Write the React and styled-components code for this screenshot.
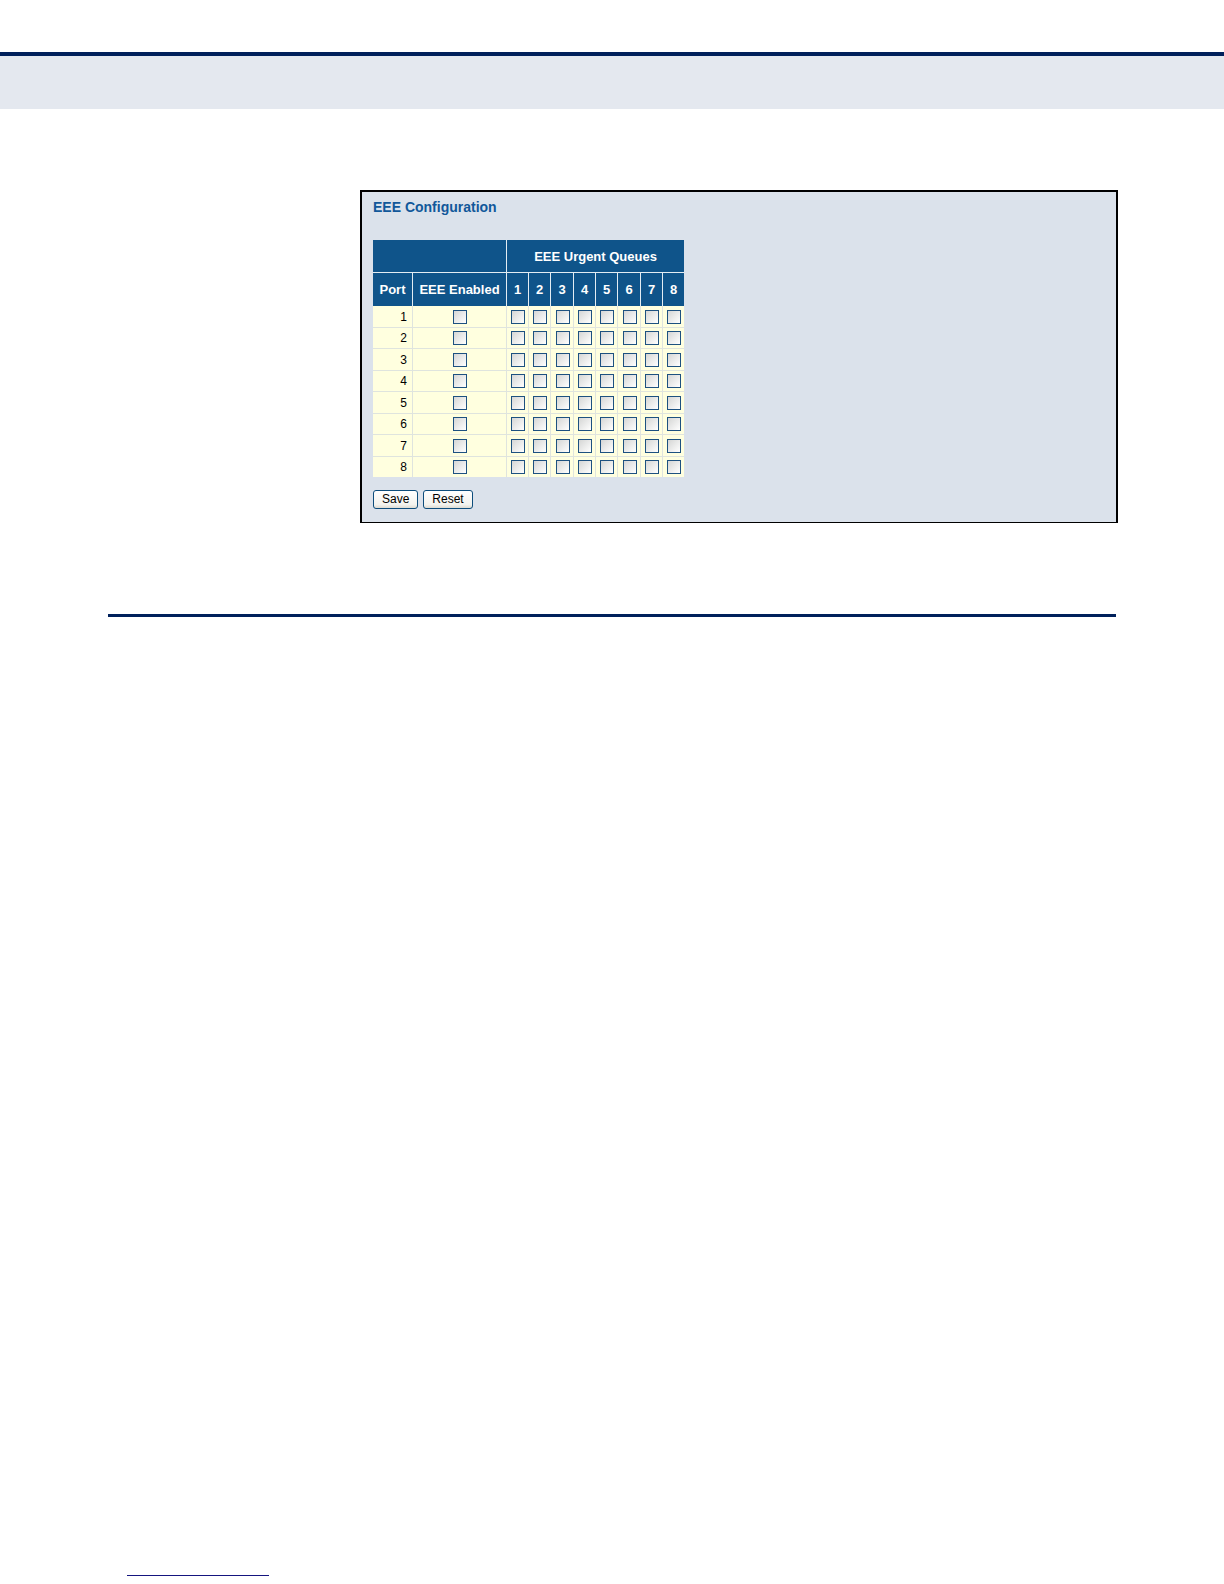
import React, { useState } from "react";
import styled, { createGlobalStyle } from "styled-components";

const NAVY = "#00205b";
const BLUE = "#0f548a";

const GlobalStyle = createGlobalStyle`
  * { box-sizing: border-box; }
  body {
    margin: 0;
    background: #fff;
    color: #000;
    font-family: "Liberation Sans", Arial, sans-serif;
  }
`;

const Page = styled.div`
  display: flex;
  flex-direction: column;
  min-height: 100vh;
  padding: 52px 0 8px;
`;

const Banner = styled.header`
  height: 57px;
  border-top: 4px solid ${NAVY};
  background: #e4e8ef;
`;

const Panel = styled.form`
  margin: 81px 106px 0 360px;
  padding: 7px 11px 13px;
  border: 2px solid #000;
  border-bottom-width: 1px;
  background: #dbe2eb;
`;

const Title = styled.h1`
  margin: 0;
  padding-bottom: 25px;
  color: #11589a;
  font-size: 14px;
  line-height: 16px;
  font-weight: bold;
`;

const Table = styled.table`
  width: 311px;
  table-layout: fixed;
  border-collapse: separate;
  border-spacing: 0;
  font-size: 13px;
  line-height: 15px;
`;

const Column = styled.col`
  width: ${({ $width }) => $width}px;
`;

const HeadCell = styled.th`
  height: 33px;
  padding: 0;
  border-right: ${({ $last }) => ($last ? "0" : "1px solid #e3edf3")};
  border-bottom: ${({ $group }) => ($group ? "1px solid #e3edf3" : "0")};
  background: ${BLUE};
  color: #fff;
  text-align: center;
  vertical-align: middle;
`;

const Cell = styled.td`
  padding: 3px 0 3px 1px;
  border-right: 1px solid #dfe4de;
  border-bottom: 1px solid #dfe4de;
  background: #ffffdf;
  vertical-align: top;

  &:last-child { border-right: 0; }
`;

const PortCell = styled(Cell).attrs({ as: "th", scope: "row" })`
  padding-right: 5px;
  font-size: 12px;
  font-weight: normal;
  text-align: right;
  line-height: 14px;
`;

const PortRow = styled.tr`
  height: 21px;

  &:nth-child(odd) { height: 22px; }
  &:nth-child(odd) > * { padding-top: 4px; }
  &:last-child { height: 20px; }
  &:last-child > * { border-bottom: 0; }
`;

const CheckBox = styled.input.attrs({ type: "checkbox" })`
  appearance: none;
  display: block;
  width: 14px;
  height: 14px;
  margin: 0 auto;
  border: 1px solid #1d5180;
  background: linear-gradient(135deg, #d5d6d5, #fff);

  &:checked { box-shadow: inset 0 0 0 3px #fff, inset 0 0 0 8px #21a121; }
`;

const Actions = styled.div`
  display: flex;
  gap: 5px;
  padding-top: 13px;
`;

const Button = styled.button`
  height: 19px;
  padding: 0 8px;
  border: 1px solid #0d4d7c;
  border-radius: 3px;
  background: linear-gradient(#fff, #f3f3ee 80%, #dedbd2);
  color: #000;
  font: 12px/17px "Liberation Sans", Arial, sans-serif;
`;

const Divider = styled.hr`
  width: auto;
  height: 3px;
  margin: 91px 108px 0;
  border: 0;
  background: ${NAVY};
`;

const Footer = styled.footer`
  width: 142px;
  margin: auto 0 0 127px;
  border-top: 1px solid #15157f;
`;

const numbers = [1, 2, 3, 4, 5, 6, 7, 8];
const columns = [40, 94, 22, 22, 23, 22, 22, 23, 22, 21];

export default function App() {
  const [checked, setChecked] = useState({});
  const toggle = (id) => setChecked((now) => ({ ...now, [id]: !now[id] }));

  const renderBox = (id, label) => (
    <CheckBox
      id={id}
      aria-label={label}
      checked={Boolean(checked[id])}
      onChange={() => toggle(id)}
    />
  );

  return (
    <>
      <GlobalStyle />
      <Page>
        <Banner />
        <Panel onSubmit={(event) => event.preventDefault()} onReset={() => setChecked({})}>
          <Title>EEE Configuration</Title>
          <Table>
            <colgroup>
              {columns.map((width, index) => (
                <Column key={index} $width={width} />
              ))}
            </colgroup>
            <thead>
              <tr>
                <HeadCell as="td" colSpan={2} $group />
                <HeadCell colSpan={8} scope="colgroup" $group $last>EEE Urgent Queues</HeadCell>
              </tr>
              <tr>
                <HeadCell scope="col">Port</HeadCell>
                <HeadCell scope="col">EEE Enabled</HeadCell>
                {numbers.map((queue) => (
                  <HeadCell key={queue} scope="col" $last={queue === 8}>{queue}</HeadCell>
                ))}
              </tr>
            </thead>
            <tbody>
              {numbers.map((port) => (
                <PortRow key={port}>
                  <PortCell>{port}</PortCell>
                  <Cell>{renderBox(`port-${port}`, `Port ${port} EEE Enabled`)}</Cell>
                  {numbers.map((queue) => (
                    <Cell key={queue}>
                      {renderBox(`port-${port}-queue-${queue}`, `Port ${port} Urgent Queue ${queue}`)}
                    </Cell>
                  ))}
                </PortRow>
              ))}
            </tbody>
          </Table>
          <Actions>
            <Button type="submit">Save</Button>
            <Button type="reset">Reset</Button>
          </Actions>
        </Panel>
        <Divider />
        <Footer />
      </Page>
    </>
  );
}
